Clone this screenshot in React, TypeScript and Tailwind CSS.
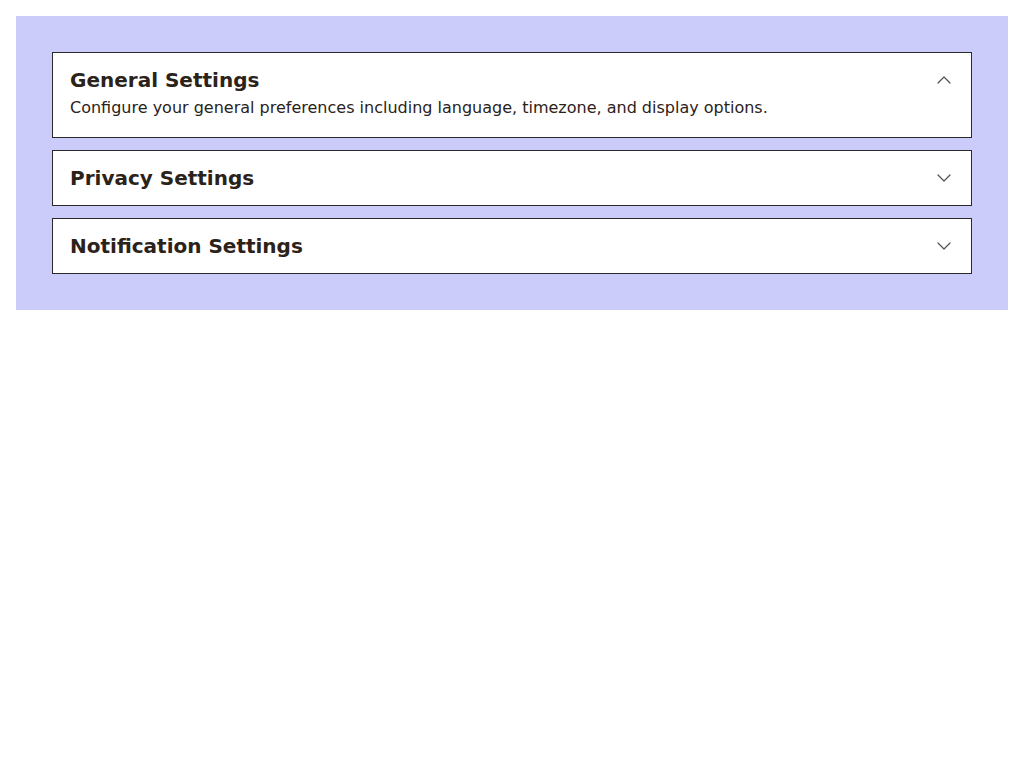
import { useState } from "react";
import { ChevronDown, ChevronUp } from "lucide-react";

type Section = {
  id: string;
  title: string;
  description: string;
};

const sections: Section[] = [
  {
    id: "general",
    title: "General Settings",
    description:
      "Configure your general preferences including language, timezone, and display options.",
  },
  {
    id: "privacy",
    title: "Privacy Settings",
    description: "Control who can see your profile, activity and personal data.",
  },
  {
    id: "notifications",
    title: "Notification Settings",
    description: "Choose how and when you want to be notified about updates.",
  },
];

export default function App() {
  const [open, setOpen] = useState<string | null>("general");

  return (
    <div className="p-4 font-['DejaVu_Sans',sans-serif] text-[#2b2219]">
      <div className="bg-[#ccccfb] p-9 flex flex-col gap-3">
        {sections.map((s) => {
          const isOpen = open === s.id;
          return (
            <div key={s.id} className="border border-[#2a2a2a] bg-white">
              <button
                type="button"
                onClick={() => setOpen(isOpen ? null : s.id)}
                className="w-full flex items-center justify-between pl-[17px] pr-[15px] pt-3 text-left cursor-pointer"
              >
                <h3 className="text-[20px] leading-[30px] font-bold">{s.title}</h3>
                {isOpen ? (
                  <ChevronUp size={24} strokeWidth={1.25} className="text-[#555]" />
                ) : (
                  <ChevronDown size={24} strokeWidth={1.25} className="text-[#555]" />
                )}
              </button>
              {isOpen ? (
                <p className="px-[17px] pt-px pb-[17px] text-base leading-6">{s.description}</p>
              ) : (
                <div className="pb-3" />
              )}
            </div>
          );
        })}
      </div>
    </div>
  );
}
